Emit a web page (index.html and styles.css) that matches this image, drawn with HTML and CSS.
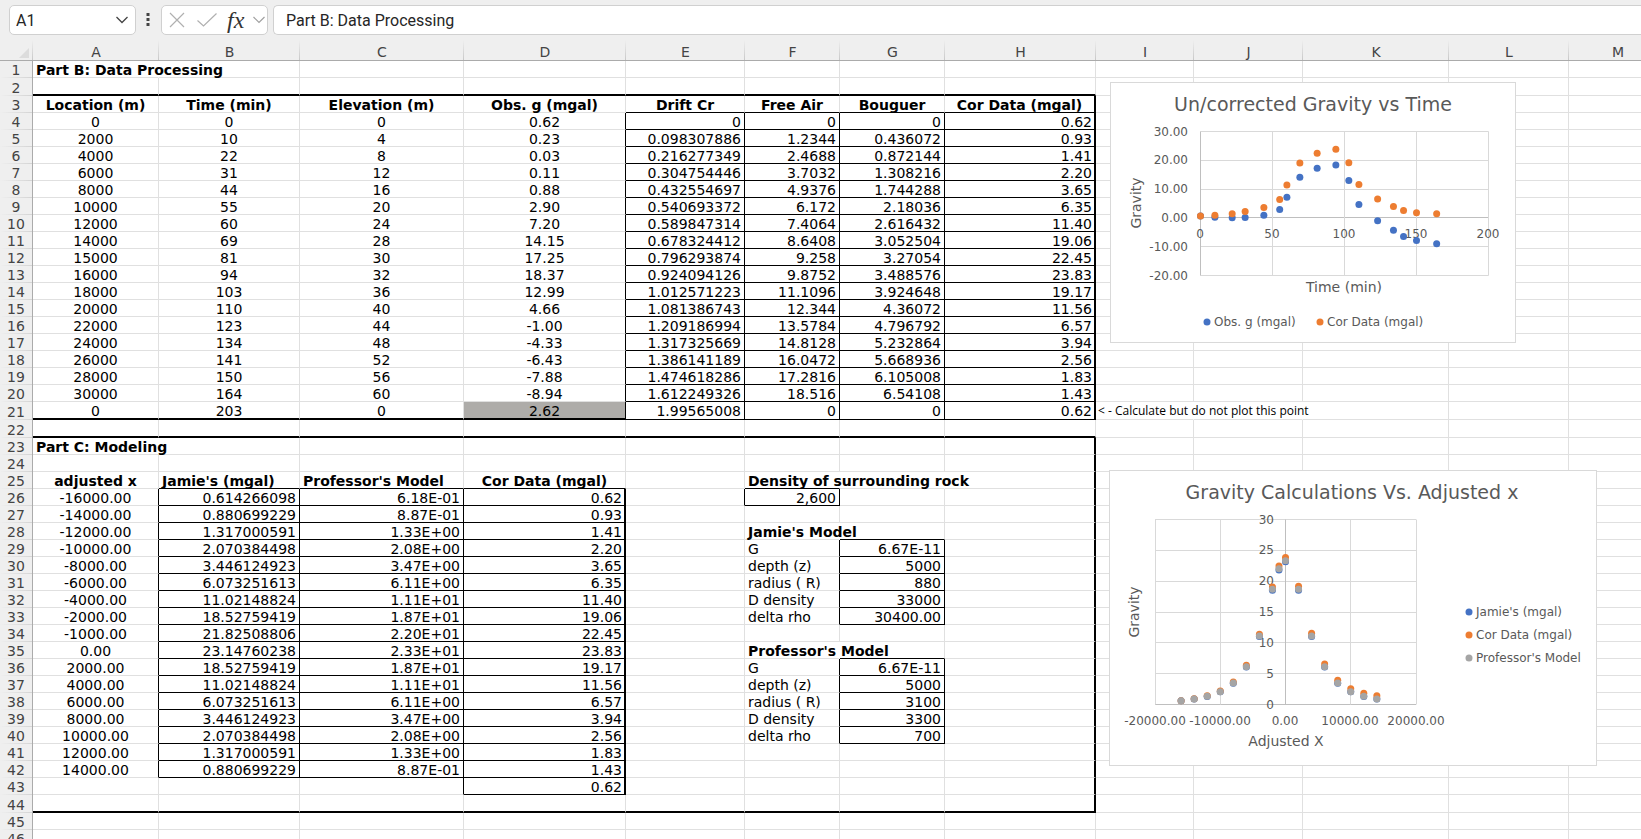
FILE: index.html
```html
<!DOCTYPE html>
<html lang="en">
<head>
<meta charset="utf-8">
<title>Part B: Data Processing</title>
<link rel="stylesheet" href="styles.css">
</head>
<body>
<header class="formula-bar">
  <div class="box name-box">
    <input class="name-input" type="text" value="A1" aria-label="Name box">
    <button class="icon-button" type="button" aria-label="Show names"><svg width="14" height="8" viewBox="0 0 14 8"><path d="M1.5 1 L7 6.500 L12.500 1" fill="none" stroke="#444" stroke-width="1.3"/></svg></button>
  </div>
  <svg class="grip" width="4" height="14" viewBox="0 0 4 14"><path d="M0.500 0h3v3h-3zM0.500 5h3v3h-3zM0.500 10h3v3h-3z" fill="#444"/></svg>
  <div class="box actions">
    <button class="icon-button" type="button" aria-label="Cancel"><svg width="16" height="16" viewBox="0 0 16 16"><path d="M1 1L15 15M15 1L1 15" stroke="#b0b0b0" stroke-width="1.2"/></svg></button>
    <button class="icon-button enter" type="button" aria-label="Enter"><svg width="20" height="14" viewBox="0 0 20 14"><path d="M0.500 7.500L6.500 13L19.500 0.500" fill="none" stroke="#b0b0b0" stroke-width="1.2"/></svg></button>
    <button class="icon-button fx" type="button" aria-label="Insert function">fx</button>
    <button class="icon-button" type="button" aria-label="More functions"><svg width="12" height="8" viewBox="0 0 12 8"><path d="M0.500 1L6 6.500L11.500 1" fill="none" stroke="#a0a0a0" stroke-width="1.2"/></svg></button>
  </div>
  <input class="box formula-input" type="text" value="Part B: Data Processing" aria-label="Formula bar">
</header>
<main class="sheet">
  <table class="grid">
    <colgroup>
      <col class="w-head"><col class="w-a"><col class="w-b"><col class="w-c"><col class="w-d"><col class="w-e"><col class="w-f"><col class="w-g"><col class="w-h"><col class="w-i"><col class="w-j"><col class="w-k"><col class="w-l"><col class="w-m">
    </colgroup>
    <thead><tr id="letters"></tr></thead>
    <tbody id="rows"></tbody>
  </table>
  <svg class="chart chart-time" id="chart-time" width="406" height="261" role="img" aria-label="Un/corrected Gravity vs Time"></svg>
  <svg class="chart chart-model" id="chart-model" width="488" height="296" role="img" aria-label="Gravity Calculations Vs. Adjusted x"></svg>
</main>
<script src="script.js"></script>
</body>
</html>
```
FILE: styles.css
```css
* { box-sizing: border-box; }
body {
  margin: 0;
  height: 100vh;
  overflow: hidden;
  display: flex;
  flex-direction: column;
  background: #efefef;
  font-family: "DejaVu Sans", Verdana, sans-serif;
  font-size: 14px;
  color: #000;
}

/* Formula bar */
.formula-bar {
  display: flex;
  align-items: center;
  flex: none;
  padding: 5px 0 5px 9px;
}
.box {
  display: flex;
  align-items: center;
  height: 30px;
  background: #fff;
  border: 1px solid #d0d0d0;
  border-radius: 5px;
}
.name-box { width: 127px; padding: 0 6px; }
.name-input, .formula-input {
  font-family: Roboto, "Open Sans", sans-serif;
  font-size: 16px;
  color: #262626;
  outline: none;
}
.name-input { flex: 1; min-width: 0; border: 0; padding: 0; background: none; }
.icon-button {
  display: flex;
  padding: 0;
  border: 0;
  background: none;
}
.grip { margin: 0 11px 0 10px; }
.actions { width: 107px; padding: 0 1px 0 7px; }
.enter { margin-left: 12px; }
.fx {
  width: 20px;
  margin: 0 6px 0 10px;
  font-family: "Liberation Serif", serif;
  font-size: 24px;
  line-height: 24px;
  font-style: italic;
  color: #333;
}
.formula-input {
  flex: 1;
  min-width: 0;
  margin-left: 5px;
  padding: 0 12px;
  border-right: 0;
  border-radius: 5px 0 0 5px;
}

/* Grid */
.sheet { position: relative; flex: 1; overflow: hidden; }
.grid {
  table-layout: fixed;
  width: 1667px;
  border-collapse: separate;
  border-spacing: 0;
  background: #fff;
}
.w-head { width: 33px; }
.w-a { width: 126px; }
.w-b { width: 141px; }
.w-c { width: 164px; }
.w-d { width: 162px; }
.w-e { width: 119px; }
.w-f { width: 95px; }
.w-g { width: 105px; }
.w-h { width: 151px; }
.w-i { width: 98px; }
.w-j { width: 109px; }
.w-k { width: 146px; }
.w-l { width: 120px; }
.w-m { width: 98px; }

tr { height: 17px; }
.tall { height: 18px; }
th {
  padding: 0;
  font-weight: normal;
  color: #444;
  background: #efefef;
}
.letter {
  height: 21px;
  padding-top: 3px;
  line-height: 16px;
  border-bottom: 1px solid #ababab;
  background: linear-gradient(#efefef, #c8c8c8) right / 1px 100% no-repeat #efefef;
}
.corner svg { display: block; margin: 3px 0 0 19px; }
.number {
  vertical-align: bottom;
  border-right: 1px solid #ababab;
  background: linear-gradient(90deg, #efefef, #d4d4d4) bottom / 100% 1px no-repeat #efefef;
}
.number .text { height: 17px; }
td {
  padding: 0;
  vertical-align: top;
  border-right: 1px solid #e0e0e0;
  border-bottom: 1px solid #e0e0e0;
}
.text {
  display: block;
  height: 16px;
  padding: 0 3px;
  line-height: 18px;
  white-space: nowrap;
}
.bold { font-weight: bold; }
.center { text-align: center; }
.right { text-align: right; }
.note {
  padding: 0 2px;
  font-family: "Open Sans", "Noto Sans", sans-serif;
  font-size: 12px;
}
.fill { background: #aeaca9; }
.open { border-right-color: transparent; }
.line-bottom { border-bottom: 1px solid #000; }
.line-right { border-right: 1px solid #000; }
.thick-bottom { border-bottom: 2px solid #000; }
.thick-right { border-right: 2px solid #000; }
.thick-right .right { padding-right: 2px; }

/* Charts float over the cells */
.chart {
  position: absolute;
  background: #fff;
  border: 1px solid #d9d9d9;
}
.chart-time { left: 1110px; top: 42px; }
.chart-model { left: 1109px; top: 430px; }
.chart text { font-size: 12px; fill: #595959; }
.chart .title { font-size: 19px; }
.chart .axis-title { font-size: 14px; }
.gridline { stroke: #d9d9d9; fill: none; }
.axis { stroke: #bfbfbf; }
.blue { fill: #4472c4; }
.orange { fill: #ed7d31; }
.gray { fill: #a5a5a5; }
```
FILE: script.js
```js
const letters = 'ABCDEFGHIJKLM'.split('');
const ROWS = 46;
const cells = {};

function put(ref, text, cls) {
  cells[ref] = { text: text, cls: cls || '' };
}
function column(letter, first, values, cls) {
  values.trim().split(/\s+/).forEach((v, i) => put(letter + (first + i), v, cls));
}

put('A1', 'Part B: Data Processing', 'bold');
put('A3', 'Location (m)', 'bold center');
put('B3', 'Time (min)', 'bold center');
put('C3', 'Elevation (m)', 'bold center');
put('D3', 'Obs. g (mgal)', 'bold center');
put('E3', 'Drift Cr', 'bold center');
put('F3', 'Free Air', 'bold center');
put('G3', 'Bouguer', 'bold center');
put('H3', 'Cor Data (mgal)', 'bold center');

const time = '0 10 22 31 44 55 60 69 81 94 103 110 123 134 141 150 164 203';
const observed = '0.62 0.23 0.03 0.11 0.88 2.90 7.20 14.15 17.25 18.37 12.99 4.66 -1.00 -4.33 -6.43 -7.88 -8.94 2.62';
const corrected = '0.62 0.93 1.41 2.20 3.65 6.35 11.40 19.06 22.45 23.83 19.17 11.56 6.57 3.94 2.56 1.83 1.43 0.62';

column('A', 4, '0 2000 4000 6000 8000 10000 12000 14000 15000 16000 18000 20000 22000 24000 26000 28000 30000 0', 'center');
column('B', 4, time, 'center');
column('C', 4, '0 4 8 12 16 20 24 28 30 32 36 40 44 48 52 56 60 0', 'center');
column('D', 4, observed, 'center');
column('E', 4, '0 0.098307886 0.216277349 0.304754446 0.432554697 0.540693372 0.589847314 0.678324412 0.796293874 0.924094126 1.012571223 1.081386743 1.209186994 1.317325669 1.386141189 1.474618286 1.612249326 1.99565008', 'right');
column('F', 4, '0 1.2344 2.4688 3.7032 4.9376 6.172 7.4064 8.6408 9.258 9.8752 11.1096 12.344 13.5784 14.8128 16.0472 17.2816 18.516 0', 'right');
column('G', 4, '0 0.436072 0.872144 1.308216 1.744288 2.18036 2.616432 3.052504 3.27054 3.488576 3.924648 4.36072 4.796792 5.232864 5.668936 6.105008 6.54108 0', 'right');
column('H', 4, corrected, 'right');
put('I21', '< - Calculate but do not plot this point', 'note');

put('A23', 'Part C: Modeling', 'bold');
put('A25', 'adjusted x', 'bold center');
put('B25', "Jamie's (mgal)", 'bold');
put('C25', "Professor's Model", 'bold');
put('D25', 'Cor Data (mgal)', 'bold center');
put('F25', 'Density of surrounding rock', 'bold');

const adjusted = '-16000.00 -14000.00 -12000.00 -10000.00 -8000.00 -6000.00 -4000.00 -2000.00 -1000.00 0.00 2000.00 4000.00 6000.00 8000.00 10000.00 12000.00 14000.00';
const jamie = '0.614266098 0.880699229 1.317000591 2.070384498 3.446124923 6.073251613 11.02148824 18.52759419 21.82508806 23.14760238 18.52759419 11.02148824 6.073251613 3.446124923 2.070384498 1.317000591 0.880699229';
const professor = '6.18E-01 8.87E-01 1.33E+00 2.08E+00 3.47E+00 6.11E+00 1.11E+01 1.87E+01 2.20E+01 2.33E+01 1.87E+01 1.11E+01 6.11E+00 3.47E+00 2.08E+00 1.33E+00 8.87E-01';
column('A', 26, adjusted, 'center');
column('B', 26, jamie, 'right');
column('C', 26, professor, 'right');
column('D', 26, corrected, 'right');

put('F26', '2,600', 'right');
const labels = ['G', 'depth (z)', 'radius ( R)', 'D density', 'delta rho'];
put('F28', "Jamie's Model", 'bold');
labels.forEach((t, i) => put('F' + (29 + i), t));
column('G', 29, '6.67E-11 5000 880 33000 30400.00', 'right');
put('F35', "Professor's Model", 'bold');
labels.forEach((t, i) => put('F' + (36 + i), t));
column('G', 36, '6.67E-11 5000 3100 3300 700', 'right');

// Cell borders, keyed by cell
const edges = {};
function edge(range, cls) {
  const [from, to] = range.split(':');
  for (let c = letters.indexOf(from[0]); c <= letters.indexOf(to[0]); c++) {
    for (let r = +from.slice(1); r <= +to.slice(1); r++) {
      const key = letters[c] + r;
      edges[key] = (edges[key] || '') + ' ' + cls;
    }
  }
}
edge('A2:H2', 'thick-bottom');
edge('E3:H21', 'line-bottom');
edge('D4:G21', 'line-right');
edge('H3:H21', 'thick-right');
edge('A21:D21', 'thick-bottom');
edge('D21:D21', 'fill');
edge('A22:H22', 'thick-bottom');
edge('H23:H44', 'thick-right');
edge('B25:D42', 'line-bottom');
edge('A26:C42', 'line-right');
edge('D26:D43', 'thick-right');
edge('C43:C43', 'line-right');
edge('D43:D43', 'line-bottom');
edge('F25:F26', 'line-bottom');
edge('E26:F26', 'line-right');
edge('G28:G33', 'line-bottom');
edge('F29:G33', 'line-right');
edge('G35:G40', 'line-bottom');
edge('F36:G40', 'line-right');
edge('A44:H44', 'thick-bottom');

// Long text runs on into the empty cells to its right
['A1:A1', 'I21:J21', 'A23:A23', 'F25:G25', 'F28:F28', 'F35:F35'].forEach(r => edge(r, 'open'));

const headRow = document.getElementById('letters');
headRow.innerHTML = '<th class="letter corner"><svg width="10" height="10" viewBox="0 0 10 10"><path d="M10 0V10H0z" fill="#dcdcdc"/></svg></th>' +
  letters.map(l => '<th class="letter" scope="col">' + l + '</th>').join('');

const tall = [2, 21, 22, 44];
let html = '';
for (let r = 1; r <= ROWS; r++) {
  html += '<tr' + (tall.includes(r) ? ' class="tall"' : '') + '><th class="number" scope="row"><span class="text">' + r + '</span></th>';
  letters.forEach(l => {
    const key = l + r;
    const cell = cells[key];
    html += '<td class="' + (edges[key] || '').trim() + '">' +
      (cell ? '<span class="text ' + cell.cls + '">' + cell.text.replace('<', '&lt;') + '</span>' : '') + '</td>';
  });
  html += '</tr>';
}
document.getElementById('rows').innerHTML = html;

// Charts
const numbers = s => s.split(' ').map(Number);
function label(x, y, text, anchor, cls) {
  return '<text x="' + x + '" y="' + y + '" text-anchor="' + (anchor || 'middle') + '" class="' + (cls || '') + '">' + text + '</text>';
}
function line(x1, y1, x2, y2, cls) {
  return '<line x1="' + x1 + '" y1="' + y1 + '" x2="' + x2 + '" y2="' + y2 + '" class="gridline ' + (cls || '') + '"/>';
}
function dot(x, y, cls) {
  return '<circle cx="' + x + '" cy="' + y + '" r="3.5" class="' + cls + '"/>';
}
function sideTitle(x, y, text) {
  return '<text transform="translate(' + x + ' ' + y + ') rotate(-90)" text-anchor="middle" class="axis-title">' + text + '</text>';
}
function series(xs, ys, px, py, cls) {
  return xs.map((x, i) => dot(px(x), py(ys[i]), cls)).join('');
}

(function timeChart() {
  const px = v => 89.5 + v * 1.44;
  const py = v => 48.5 + (30 - v) * 2.88;
  const snap = v => Math.floor(v) + 0.5;
  let s = label(202, 28, 'Un/corrected Gravity vs Time', 'middle', 'title');
  for (let v = 30; v >= -20; v -= 10) s += line(px(0), snap(py(v)), px(200), snap(py(v)), v === 0 ? 'axis' : '');
  for (let v = 0; v <= 200; v += 50) s += line(snap(px(v)), py(30), snap(px(v)), py(-20), v === 0 ? 'axis' : '');
  for (let v = 30; v >= -20; v -= 10) s += label(77, Math.round(py(v)) + 4, v.toFixed(2), 'end');
  for (let v = 0; v <= 200; v += 50) s += label(Math.floor(px(v)), 155, v);
  const xs = numbers(time).slice(0, 17);
  s += series(xs, numbers(observed), px, py, 'blue') + series(xs, numbers(corrected), px, py, 'orange');
  s += label(233, 209, 'Time (min)', 'middle', 'axis-title') + sideTitle(30, 120, 'Gravity');
  s += dot(96, 239, 'blue') + label(103, 243, 'Obs. g (mgal)', 'start');
  s += dot(209, 239, 'orange') + label(216, 243, 'Cor Data (mgal)', 'start');
  document.getElementById('chart-time').innerHTML = s;
})();

(function modelChart() {
  const px = v => 175.5 + v * 130.5 / 20000;
  const py = v => 233.5 - v * 185 / 30;
  const snap = v => Math.floor(v) + 0.5;
  let s = label(242, 28, 'Gravity Calculations Vs. Adjusted x', 'middle', 'title');
  for (let v = 0; v <= 30; v += 5) s += line(px(-20000), snap(py(v)), px(20000), snap(py(v)), v === 0 ? 'axis' : '');
  for (let v = -20000; v <= 20000; v += 10000) s += line(snap(px(v)), py(30), snap(px(v)), py(0), v === 0 ? 'axis' : '');
  for (let v = 0; v <= 30; v += 5) s += label(164, Math.round(py(v)) + 4, v, 'end');
  for (let v = -20000; v <= 20000; v += 10000) s += label(Math.floor(px(v)), 254, v.toFixed(2));
  const xs = numbers(adjusted);
  s += series(xs, numbers(jamie), px, py, 'blue') + series(xs, numbers(corrected), px, py, 'orange') + series(xs, numbers(professor), px, py, 'gray');
  s += label(176, 275, 'Adjusted X', 'middle', 'axis-title') + sideTitle(29, 141, 'Gravity');
  [["Jamie's (mgal)", 'blue'], ['Cor Data (mgal)', 'orange'], ["Professor's Model", 'gray']].forEach(([t, c], i) => {
    s += dot(359, 141 + i * 23, c) + label(366, 145 + i * 23, t, 'start');
  });
  document.getElementById('chart-model').innerHTML = s;
})();
```
